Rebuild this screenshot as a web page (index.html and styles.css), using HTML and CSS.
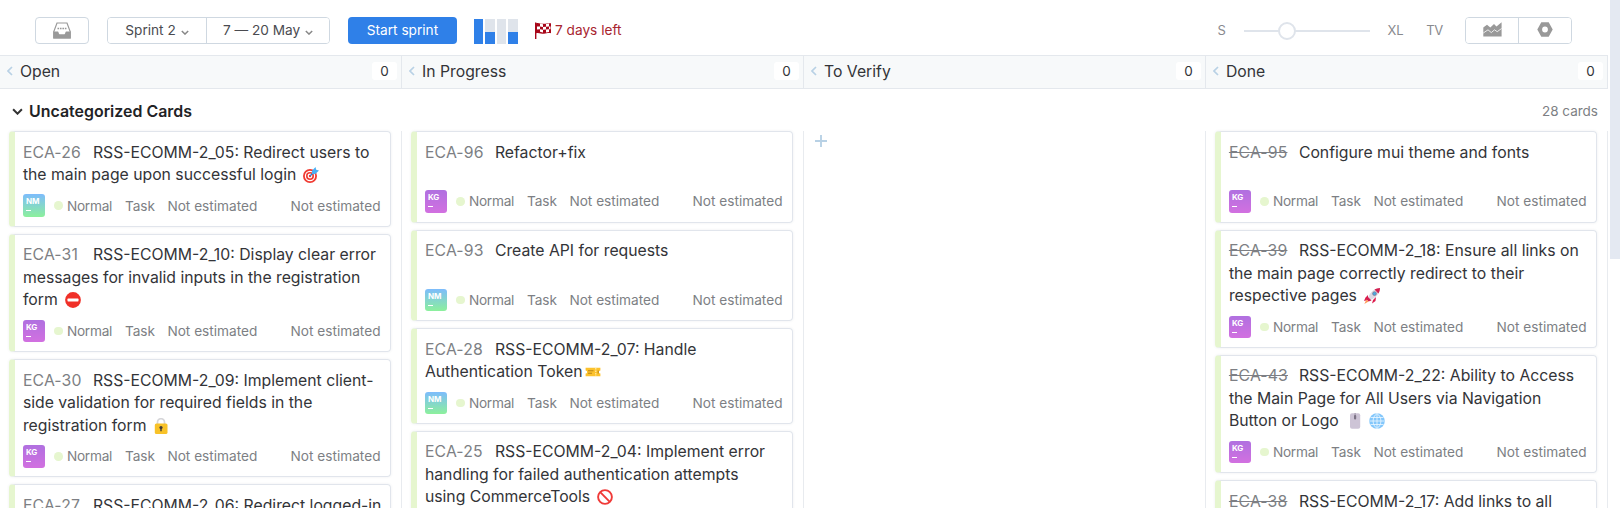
FILE: index.html
```html
<!DOCTYPE html>
<html lang="en">
<head>
<meta charset="utf-8">
<title>Agile board</title>
<link rel="stylesheet" href="styles.css">
</head>
<body>
<svg class="defs" width="0" height="0">
  <symbol id="chev" viewBox="0 0 10 6"><path d="M1 1l4 4 4-4" fill="none" stroke="currentColor" stroke-width="1.8"/></symbol>
  <symbol id="back" viewBox="0 0 6 10"><path d="M5 1L1 5l4 4" fill="none" stroke="currentColor" stroke-width="1.7"/></symbol>
</svg>
<div class="page">
<div class="board">
  <header class="toolbar">
    <button class="btn inbox"><svg width="18" height="17" viewBox="0 0 18 17"><path d="M4 1h10l3.200 8.500v6.300H.8V9.500z" fill="#fff" stroke="#999" stroke-width="1.200"/><path d="M.3 9.500h4.700c.6 0 .7 2.700 1.500 2.700h5c.8 0 .9-2.700 1.500-2.700h4.700v7H.3z" fill="#999"/><path d="M4.500 6.500h9" stroke="#999" stroke-width="1.600" stroke-dasharray="1.600 .85"/></svg></button>
    <div class="group sprint"><button class="seg seg-a"><span>Sprint 2</span><svg class="chev"><use href="#chev"/></svg></button><button class="seg seg-b"><span>7 — 20 May</span><svg class="chev"><use href="#chev"/></svg></button></div>
    <button class="start">Start sprint</button>
    <div class="bars"><i class="full"></i><i class="half"></i><i></i><i class="half"></i></div>
    <div class="left"><svg width="16" height="17" viewBox="0 0 16 17"><path d="M0 .5h1.400V17H0z" fill="#a8071a"/><path d="M1 1.200c3-1 5 1 8 .6 2-.2 4-.8 7-.6v10c-3-.5-5 .6-7 .6-3 0-5-1.300-8-.6z" fill="#a8071a"/><path d="M5 1.600l3 .6v2.700l-3-.5zM11 2l3-.4v2.800l-3 .4zM2 4.400l3 0v2.900l-3 .2zM8 4.900l3-.1v2.800l-3 .1zM5 7.300l3 .4v2.700l-3-.7zM11 7.600l3-.3v2.700l-3 .4zM14 4.400h1.500v2.900H14z" fill="#fff"/></svg><span>7 days left</span></div>
    <div class="size"><span class="s">S</span><div class="slider"><b></b></div><span class="xl">XL</span><span class="tv">TV</span></div>
    <div class="group tools"><button class="seg"><svg width="19" height="15" viewBox="0 0 19 15"><path d="M.3 5.500L4 2.800l3.300 2.800L11 2l2.500 2.500L18.600.3V14.500H.3z" fill="#999"/><path d="M.3 11L5 7.800l3.300 2.800 3.200-2.800 2.700 1.900 4.400-3.200" fill="none" stroke="#fff" stroke-width=".8"/></svg></button><button class="seg"><svg width="16" height="15" viewBox="0 0 16 15"><path d="M4.300.3h7.400L15.700 7.500l-4 7.200H4.300L.3 7.500zM8 4.600a2.900 2.900 0 1 0 0 5.800 2.900 2.900 0 0 0 0-5.800z" fill="#999" fill-rule="evenodd"/></svg></button></div>
  </header>
  <div class="heads">
    <div class="head"><svg class="back"><use href="#back"/></svg><h2>Open</h2><span class="count">0</span></div>
    <div class="head"><svg class="back"><use href="#back"/></svg><h2>In Progress</h2><span class="count">0</span></div>
    <div class="head"><svg class="back"><use href="#back"/></svg><h2>To Verify</h2><span class="count">0</span></div>
    <div class="head"><svg class="back"><use href="#back"/></svg><h2>Done</h2><span class="count">0</span></div>
  </div>
  <div class="lane"><svg class="lane-chev"><use href="#chev"/></svg><h3>Uncategorized Cards</h3><span class="total">28 cards</span></div>
  <main class="cols">
    <section class="col">
      <article class="card"><p class="title"><span class="id">ECA-26</span>RSS-ECOMM-2_05: Redirect users to<br>the main page upon successful login <svg class="emo" viewBox="0 0 16 16"><circle cx="7" cy="9" r="7" fill="#f03a32"/><circle cx="7" cy="9" r="5.200" fill="#fff"/><circle cx="7" cy="9" r="4" fill="#f03a32"/><circle cx="7" cy="9" r="2.400" fill="#fff"/><circle cx="7" cy="9" r="1.200" fill="#f03a32"/><path d="M7 9l5-5" stroke="#2b7fd0" stroke-width="1.200"/><path d="M9 7V3.800L12.500 0l.7 2.800 2.800.7L12.300 7z" fill="#48b0f5"/></svg></p>
        <div class="meta"><span class="ava nm">NM</span><i class="dot"></i><span class="pri">Normal</span><span class="type">Task</span><span>Not estimated</span><span class="est">Not estimated</span></div></article>
      <article class="card"><p class="title"><span class="id">ECA-31</span>RSS-ECOMM-2_10: Display clear error<br>messages for invalid inputs in the registration<br>form <svg class="emo" viewBox="0 0 16 16"><circle cx="8" cy="8" r="7.900" fill="#f03028"/><rect x="2.500" y="6.600" width="11" height="2.800" rx=".6" fill="#fff"/></svg></p>
        <div class="meta"><span class="ava kg">KG</span><i class="dot"></i><span class="pri">Normal</span><span class="type">Task</span><span>Not estimated</span><span class="est">Not estimated</span></div></article>
      <article class="card"><p class="title"><span class="id">ECA-30</span>RSS-ECOMM-2_09: Implement client-<br>side validation for required fields in the<br>registration form <svg class="emo" viewBox="0 0 16 16"><path d="M4.500 7V4.200a3.500 3.500 0 0 1 7 0V7" fill="none" stroke="#d5d5d8" stroke-width="1.700"/><rect x="1.800" y="5.500" width="12.700" height="10.500" rx="1.600" fill="#f8c228"/><circle cx="8" cy="9.500" r="1.600" fill="#433b35"/><path d="M7.300 10h1.400v3.200H7.300z" fill="#433b35"/></svg></p>
        <div class="meta"><span class="ava kg">KG</span><i class="dot"></i><span class="pri">Normal</span><span class="type">Task</span><span>Not estimated</span><span class="est">Not estimated</span></div></article>
      <article class="card"><p class="title"><span class="id">ECA-27</span>RSS-ECOMM-2_06: Redirect logged-in</p></article>
    </section>
    <section class="col">
      <article class="card"><p class="title"><span class="id">ECA-96</span>Refactor+fix</p>
        <div class="meta"><span class="ava kg">KG</span><i class="dot"></i><span class="pri">Normal</span><span class="type">Task</span><span>Not estimated</span><span class="est">Not estimated</span></div></article>
      <article class="card"><p class="title"><span class="id">ECA-93</span>Create API for requests</p>
        <div class="meta"><span class="ava nm">NM</span><i class="dot"></i><span class="pri">Normal</span><span class="type">Task</span><span>Not estimated</span><span class="est">Not estimated</span></div></article>
      <article class="card"><p class="title"><span class="id">ECA-28</span>RSS-ECOMM-2_07: Handle<br>Authentication Token<svg class="emo tight" viewBox="0 0 16 16"><path d="M.6 3.800h14.800v2.600a1.500 1.500 0 0 0 0 3.200v2.600H.6V9.600a1.500 1.500 0 0 0 0-3.200z" fill="#fcc22d"/><path d="M3 6.800h5.500M3 9.200h4" stroke="#b98519" stroke-width="1.100"/><path d="M10.800 4v8" stroke="#fff3c4" stroke-width="1" stroke-dasharray="1.500 1"/><path d="M13.200 6.500v3" stroke="#b98519"/></svg></p>
        <div class="meta"><span class="ava nm">NM</span><i class="dot"></i><span class="pri">Normal</span><span class="type">Task</span><span>Not estimated</span><span class="est">Not estimated</span></div></article>
      <article class="card"><p class="title"><span class="id">ECA-25</span>RSS-ECOMM-2_04: Implement error<br>handling for failed authentication attempts<br>using CommerceTools <svg class="emo" viewBox="0 0 16 16"><circle cx="8" cy="8" r="6.900" fill="#fff" stroke="#f03a38" stroke-width="1.900"/><path d="M3.200 3.200l9.600 9.600" stroke="#f03a38" stroke-width="1.900"/></svg></p></article>
    </section>
    <section class="col"><svg class="plus" width="12" height="12" viewBox="0 0 12 12"><path d="M6 0v12M0 6h12" stroke="#b8d1e5" stroke-width="1.900"/></svg></section>
    <section class="col">
      <article class="card"><p class="title"><span class="id done">ECA-95</span>Configure mui theme and fonts</p>
        <div class="meta"><span class="ava kg">KG</span><i class="dot"></i><span class="pri">Normal</span><span class="type">Task</span><span>Not estimated</span><span class="est">Not estimated</span></div></article>
      <article class="card"><p class="title"><span class="id done">ECA-39</span>RSS-ECOMM-2_18: Ensure all links on<br>the main page correctly redirect to their<br>respective pages <svg class="emo" viewBox="0 0 16 16"><path d="M4 7L1.500 9.500 0 13l4-1zM9 12l-1 3.500L11.500 13l.5-4z" fill="#dc1b4c"/><path d="M16 0c-5 .3-9.500 3.500-12 9.500L6.500 12C12.500 9.500 15.700 5 16 0z" fill="#dcd8e4"/><path d="M16 0c-2 .1-4 .7-5.500 1.600l3.900 3.900C15.400 3.900 15.900 2 16 0z" fill="#d41f50"/><circle cx="10.500" cy="5.600" r="1.900" fill="#4aa8e0" stroke="#80798b" stroke-width=".7"/><path d="M3.500 8.500l4 4-3 1-2-2z" fill="#d41f50"/><path d="M2.500 11.500l2 2L.3 16z" fill="#ff9b5a"/></svg></p>
        <div class="meta"><span class="ava kg">KG</span><i class="dot"></i><span class="pri">Normal</span><span class="type">Task</span><span>Not estimated</span><span class="est">Not estimated</span></div></article>
      <article class="card"><p class="title"><span class="id done">ECA-43</span>RSS-ECOMM-2_22: Ability to Access<br>the Main Page for All Users via Navigation<br>Button or Logo <svg class="emo mouse" viewBox="0 0 16 16"><rect x="3" y=".3" width="10.200" height="15.500" rx="2" fill="#cdc4d6"/><path d="M8.100 0v3" stroke="#8b8296" stroke-width=".8"/><rect x="7" y="2" width="2.200" height="4.500" rx="1.100" fill="#7b7285"/></svg> <svg class="emo second" viewBox="0 0 16 16"><circle cx="8" cy="8" r="7.800" fill="#83c7fb"/><path d="M8 .5v15M.5 8h15M1.500 4.500h13M1.500 11.500h13M8 .5C2.800 4 2.800 12 8 15.500M8 .5c5.200 3.500 5.200 11.500 0 15" fill="none" stroke="#edf8ff" stroke-width=".8"/></svg></p>
        <div class="meta"><span class="ava kg">KG</span><i class="dot"></i><span class="pri">Normal</span><span class="type">Task</span><span>Not estimated</span><span class="est">Not estimated</span></div></article>
      <article class="card"><p class="title"><span class="id done">ECA-38</span>RSS-ECOMM-2_17: Add links to all</p></article>
    </section>
  </main>
</div>
<div class="scroll"></div>
</div>
</body>
</html>
```
FILE: styles.css
```css
* { box-sizing: border-box; }
body { margin: 0; background: #fff; overflow: hidden; font-family: Inter, "Liberation Sans", sans-serif; color: #333438; }
.defs { position: absolute; }
.page { display: flex; height: 508px; overflow: hidden; }
.board { width: 1608px; flex: none; }
.scroll { width: 10px; height: 259px; margin-left: 2px; background: #e4e9f2; }
button { font: inherit; color: inherit; padding: 0; margin: 0; background: #fff; border: 0; }
h2, h3, p { margin: 0; font-weight: 400; }

.toolbar { display: flex; align-items: flex-start; height: 54.500px; padding: 17px 36px 0 35px; font-size: 13.650px; line-height: 27px; color: #4a4b50; }
.btn, .group { height: 27px; border: 1px solid #cfd8e1; border-radius: 4px; }
.inbox { width: 54px; display: flex; align-items: center; justify-content: center; padding-bottom: 1px; }
.group { display: flex; overflow: hidden; }
.seg { display: flex; align-items: center; justify-content: center; height: 25px; gap: 5px; }
.seg + .seg { border-left: 1px solid #cfd8e1; }
.sprint { width: 223px; margin-left: 18px; }
.seg-a { width: 98px; }
.seg-b { width: 123px; }
.chev { width: 8px; height: 5px; margin-top: 3px; color: #888; }
.start { width: 109px; height: 27px; margin-left: 18px; border-radius: 4px; background: #2f80e8; color: #fff; }
.bars { display: flex; gap: 2px; margin: 2px 0 0 17px; }
.bars i { width: 9.400px; height: 25px; background: #dfe4eb; }
.bars .full { background: #2f80e8; }
.bars .half { background: linear-gradient(#dfe4eb 13px, #2f80e8 13px); }
.left { display: flex; align-items: center; gap: 4.500px; height: 27px; margin-left: 17px; color: #a8252f; }
.size { display: flex; align-items: center; margin-left: auto; height: 27px; color: #888a8e; font-size: 13px; letter-spacing: -.3px; }
.slider { width: 126px; height: 2px; margin: 0 18px 0 18px; background: #dfe4eb; }
.slider b { display: block; width: 18px; height: 18px; margin: -8px 0 0 34px; border: 2px solid #dfe4eb; border-radius: 50%; background: #fff; }
.tv { margin-left: 23px; }
.tools { width: 107px; margin-left: 22px; }
.tools .seg { flex: 1; padding-bottom: 2px; }

.heads, .cols { display: grid; grid-template-columns: repeat(4, 402px); }
.heads { height: 34.500px; border-top: 1px solid #e4e8ed; border-bottom: 1px solid #e4e8ed; background: #f7f9fa; }
.head { display: flex; align-items: center; padding: 0 4px 1px 7px; border-right: 1px solid #e4e8ed; }
.back { width: 6px; height: 10px; margin-right: 7px; color: #b8d1e5; }
.head h2 { font-size: 15.750px; }
.count { width: 25px; height: 18px; margin-left: auto; border-radius: 3px; background: #fff; font-size: 13.500px; line-height: 18px; text-align: center; }
.lane { display: flex; align-items: center; height: 42px; padding: 2px 10px 0 12px; }
.lane-chev { width: 11px; height: 7px; margin-right: 6px; color: #333; }
.lane h3 { font-size: 15.950px; font-weight: 600; color: #1f2326; }
.total { margin-left: auto; font-size: 13.500px; color: #7d7f84; }

.col { height: 377px; padding: 0 10px 0 8.500px; border-right: 1px solid #e8ebef; }
.card { margin-bottom: 7px; padding: 9.600px 9.500px 8.850px 8.400px; border: 1px solid #e1e5ec; border-left: 6px solid #e6f6cf; border-radius: 4px; box-shadow: 0 0 3px rgba(40, 60, 90, .08); }
.title { min-height: 40.700px; font-size: 15.780px; line-height: 22.500px; white-space: nowrap; }
.id { display: inline-block; width: 70px; color: #7d7f84; letter-spacing: .15px; }
.done { text-decoration: line-through; }
.emo { width: 16px; height: 16px; margin-left: 2.500px; vertical-align: -3px; }
.mouse { margin-left: 4px; }
.second { margin-left: 1px; }
.tight { margin-left: 3px; }
.meta { display: flex; align-items: center; height: 22.500px; margin-top: 7.900px; font-size: 13.650px; color: #7d7f84; }
.ava { width: 22.500px; height: 22.500px; padding: 3px 0 0 3px; border-radius: 3px; color: #fff; font-size: 8px; line-height: 9px; font-weight: 700; }
.ava::after { content: ""; display: block; width: 5px; height: 1px; margin-top: 4px; background: #fff; }
.kg { background: linear-gradient(#b070e0, #d270e0); }
.nm { background: linear-gradient(#7dbcfc, #8cf09c); }
.dot { width: 8.500px; height: 8.500px; margin: 0 4px 0 9px; border-radius: 50%; background: #e6f6cf; }
.pri { letter-spacing: -.25px; }
.type { margin: 0 12.500px 0 13px; letter-spacing: -.1px; }
.est { margin-left: auto; }
.plus { display: block; margin: 4px 0 0 2px; }
```
